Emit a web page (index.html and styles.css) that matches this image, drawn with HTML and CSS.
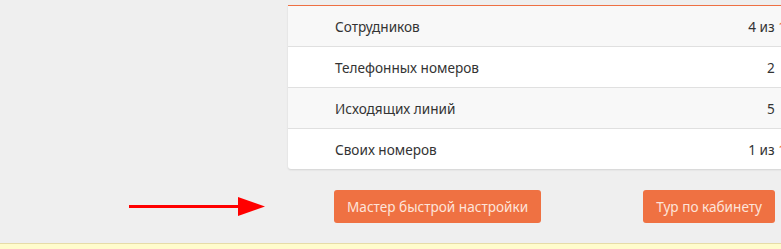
FILE: index.html
```html
<!DOCTYPE html>
<html lang="ru">
<head>
    <meta charset="UTF-8">
    <title>Тариф</title>
    <link rel="stylesheet" href="styles.css">
</head>
<body>
    <div id="page">
        <div class="side"></div>
        <div class="card">
            <div class="row shaded">
                <span class="label">Сотрудников</span>
                <span class="value">4 из <span class="limit">10</span></span>
            </div>
            <div class="row">
                <span class="label">Телефонных номеров</span>
                <span class="value">2</span>
            </div>
            <div class="row shaded">
                <span class="label">Исходящих линий</span>
                <span class="value">5</span>
            </div>
            <div class="row">
                <span class="label">Своих номеров</span>
                <span class="value">1 из <span class="limit">10</span></span>
            </div>
        </div>

        <div class="hint">
            <svg width="136" height="20" viewBox="0 0 136 20">
                <rect x="0" y="8" width="112" height="3" fill="#ff0000"/>
                <polygon points="109,0 136,9.5 109,19" fill="#ff0000"/>
            </svg>
        </div>
        <div class="actions">
            <button class="btn">Мастер быстрой настройки</button>
            <button class="btn tour">Тур по кабинету</button>
        </div>
    </div>
    <div class="notice"></div>
</body>
</html>
```

FILE: styles.css
```css
body {
    margin: 0;
    background-color: #efefef;
    font-family: 'Noto Sans', 'Open Sans', sans-serif;
    font-size: 13.6px;
    color: #333;
    overflow: hidden;
    height: 249px;
}

#page {
    display: grid;
    grid-template-columns: 288px 520px;
    padding-top: 5px;
}

.card {
    background-color: #fff;
    border-top: 1px solid #ee7043;
    border-radius: 0 0 3px 3px;
    box-shadow: 0 1px 2px rgba(0, 0, 0, 0.12);
}

.row {
    display: grid;
    grid-template-columns: 1fr 60px;
    align-items: center;
    height: 40px;
    padding: 0 7px 0 47px;
    border-bottom: 1px solid #e0e0e0;
}

.row:last-child {
    border-bottom: 0;
}

.row.shaded {
    background-color: #f8f8f8;
}

.value {
    text-align: center;
    white-space: nowrap;
    font-variant-numeric: tabular-nums;
}

.limit {
    color: #ee7043;
}

.hint {
    display: flex;
    justify-content: flex-end;
    align-items: center;
    padding-right: 23px;
    padding-top: 21px;
}

.actions {
    display: flex;
    padding: 21px 33px 0 46px;
}

.btn {
    font-family: inherit;
    font-size: 13.6px;
    height: 33px;
    padding: 0 13px;
    border: 0;
    border-radius: 3px;
    background-color: #ef7142;
    color: #fde4da;
    cursor: pointer;
}

.btn.tour {
    margin-left: auto;
}

.notice {
    margin-top: 20px;
    height: 10px;
    background-color: #fffccc;
    border-top: 1px solid #e6dca8;
}
```
